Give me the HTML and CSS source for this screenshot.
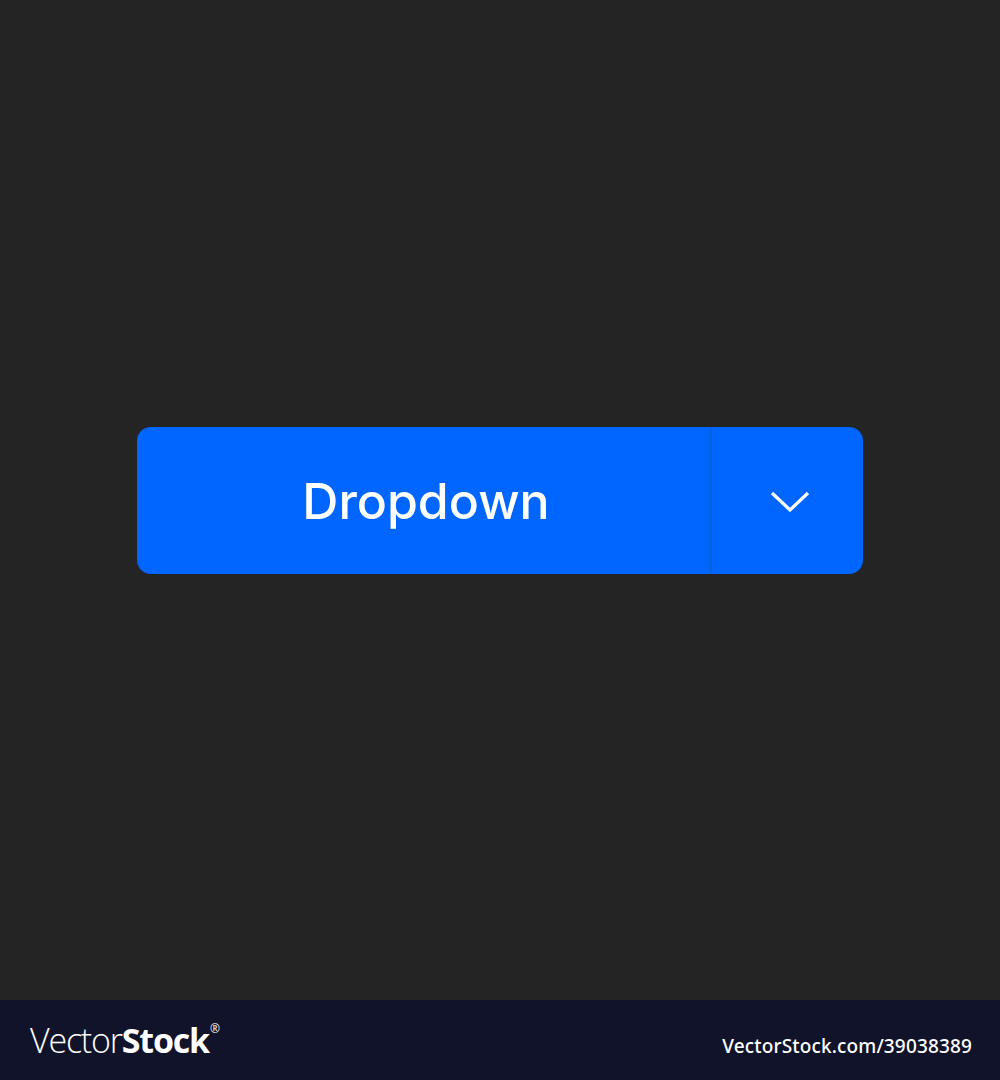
FILE: index.html
```html
<!DOCTYPE html>
<html lang="en">
<head>
<meta charset="utf-8">
<title>Dropdown</title>
<link rel="stylesheet" href="styles.css">
</head>
<body>
<main class="stage">
  <div class="split-btn">
    <button class="split-main">Dropdown</button>
    <span class="split-divider"></span>
    <button class="split-toggle" aria-label="Open">
      <svg width="40" height="24" viewBox="0 0 40 24" aria-hidden="true">
        <path d="M2 3 L20 20 L38 3" fill="none" stroke="#ffffff" stroke-width="3.2"/>
      </svg>
    </button>
  </div>
</main>
<footer class="footer">
  <div class="logo"><span class="logo-light">Vector</span><span class="logo-bold">Stock</span><sup class="logo-reg">®</sup></div>
  <div class="footer-id">VectorStock.com/39038389</div>
</footer>
</body>
</html>
```
FILE: styles.css
```css
html, body {
  margin: 0;
  padding: 0;
  background: #242424;
}
body {
  width: 1000px;
  height: 1080px;
  font-family: "Inter", sans-serif;
}
.stage {
  height: 1000px;
  display: flex;
  align-items: center;
  justify-content: center;
}
.split-btn {
  display: flex;
  width: 726px;
  height: 147px;
  border-radius: 14px;
  background: #0066ff;
  overflow: hidden;
}
.split-main,
.split-toggle {
  border: 0;
  margin: 0;
  padding: 0;
  background: transparent;
  color: #ffffff;
  display: flex;
  align-items: center;
  justify-content: center;
}
.split-main {
  width: 572px;
  font-family: "Inter", sans-serif;
  font-size: 50px;
  font-weight: 500;
  letter-spacing: 0;
  padding-left: 6px;
  padding-top: 2px;
}
.split-divider {
  width: 3px;
  background: #0b62d6;
}
.split-toggle {
  flex: 1;
  padding-left: 4px;
  padding-top: 4px;
}
.split-toggle svg {
  display: block;
}
.footer {
  height: 80px;
  background: #11132a;
  display: flex;
  align-items: center;
  justify-content: space-between;
  padding: 0 28px 0 30px;
  color: #ffffff;
}
.logo {
  font-family: "Open Sans", "Noto Sans", sans-serif;
  font-size: 34px;
  letter-spacing: -1.2px;
  line-height: 1;
  display: flex;
  align-items: flex-start;
}
.logo-light {
  font-weight: 300;
}
.logo-bold {
  font-weight: 700;
}
.logo-reg {
  font-size: 12px;
  margin-left: 1px;
  letter-spacing: 0;
  font-weight: 400;
}
.footer-id {
  font-family: "Noto Sans", sans-serif;
  font-size: 19px;
  font-weight: 500;
  letter-spacing: 0.15px;
  padding-top: 12px;
}
```
